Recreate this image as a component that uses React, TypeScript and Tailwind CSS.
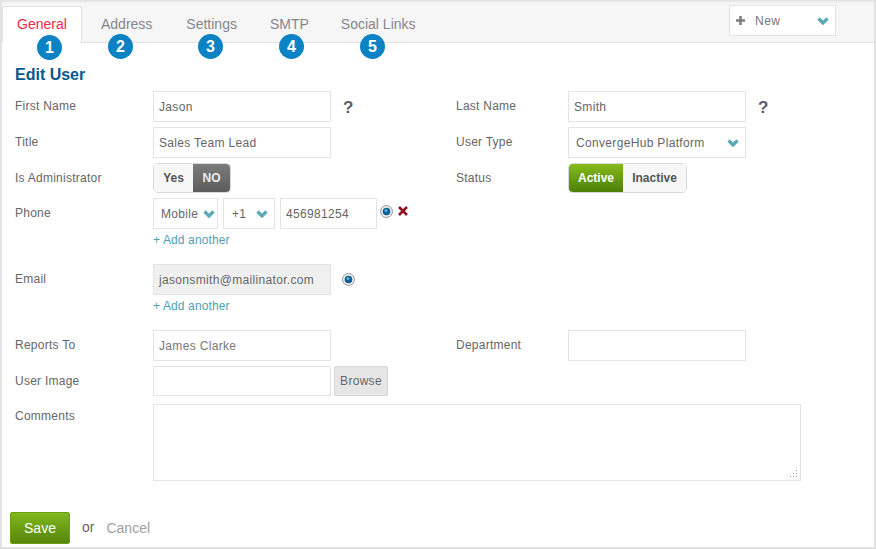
import React from "react";

const labelCls = "w-[138px] shrink-0 text-[12px] tracking-[0.25px] text-[#666]";
const rightLabelCls = "w-[112px] shrink-0 text-[12px] tracking-[0.25px] text-[#666]";
const fieldCls = "flex items-center border border-[#e4e4e4] text-[12px] tracking-[0.33px] text-[#666]";

const tabs = [
  { name: "General", cls: "" },
  { name: "Address", cls: "ml-[19px]" },
  { name: "Settings", cls: "ml-[34px]" },
  { name: "SMTP", cls: "ml-[33px]" },
  { name: "Social Links", cls: "ml-[32px]" },
];

const badges = [
  { n: 1, cls: "left-[35px] top-[35px] h-[25px] w-[25px]" },
  { n: 2, cls: "left-[106px] top-[34px] h-[25px] w-[25px]" },
  { n: 3, cls: "left-[196px] top-[34px] h-[25px] w-[25px]" },
  { n: 4, cls: "left-[277px] top-[34px] h-[25px] w-[25px]" },
  { n: 5, cls: "left-[358px] top-[34px] h-[25px] w-[25px]" },
];

const Chevron = ({ className = "" }: { className?: string }) => (
  <svg viewBox="0 0 12 8" className={`h-[8px] w-[12px] shrink-0 ${className}`}>
    <polyline points="1.5,1.5 6,6 10.5,1.5" fill="none" stroke="#5ba8b6" strokeWidth="3.2" />
  </svg>
);

const Radio = () => (
  <svg viewBox="0 0 13 13" className="h-[13px] w-[13px]">
    <circle cx="6.5" cy="6.5" r="6" fill="#ececec" stroke="#9a9a9a" strokeWidth="1" />
    <circle cx="6.5" cy="6.5" r="3.8" fill="#0f5f96" />
    <circle cx="6" cy="5.5" r="1.5" fill="#52b0e0" />
  </svg>
);

const Help = () => (
  <span className="text-[17px] font-bold leading-none text-[#5c5c66]">?</span>
);

const Label = ({ children }: { children: React.ReactNode }) => (
  <div className={labelCls}>{children}</div>
);

const Field = ({ value, muted }: { value?: string; muted?: boolean }) => (
  <div className={`${fieldCls} h-[31px] w-[178px] bg-white px-[5px] ${muted ? "text-[#777]" : ""}`}>{value}</div>
);

const AddAnother = () => (
  <div className="mt-[2px] text-[12px] tracking-[0.12px] text-[#4f9fb5]">+ Add another</div>
);

export default function App() {
  return (
    <div className="relative h-[549px] w-[876px] border-x-2 border-b-2 border-[#e2e2e2] bg-white font-['Liberation_Sans',Arial,sans-serif]">
      {/* tab bar */}
      <div className="flex h-[43px] items-end border-b border-[#e4e4e4] bg-[#f6f6f6] shadow-[inset_0_3px_3px_-2px_#d8d8d8]">
        {tabs.map((t, i) =>
          i === 0 ? (
            <div
              key={t.name}
              className="relative -mb-px flex h-[37px] w-[80px] items-start justify-center rounded-t-[3px] border border-b-0 border-[#e2e2e2] bg-white pt-[9px] text-[14px] leading-[16px] text-[#f0284a]"
            >
              {t.name}
            </div>
          ) : (
            <div
              key={t.name}
              className={`flex h-[37px] items-start pt-[11px] text-[14px] leading-[16px] text-[#85858c] ${t.cls}`}
            >
              {t.name}
            </div>
          )
        )}
        <div className="mb-[6px] ml-auto mr-[38px] flex h-[31px] w-[107px] items-center border border-[#e4e4e4] bg-white pl-[6px] pr-[6px] text-[12px] tracking-[0.5px] text-[#777]">
          <svg viewBox="0 0 10 10" className="h-[9px] w-[9px] shrink-0">
            <path d="M3.6 0h2.8v3.6H10v2.8H6.4V10H3.6V6.4H0V3.6h3.6z" fill="#7d7d7d" />
          </svg>
          <span className="ml-[10px]">New</span>
          <Chevron className="ml-auto" />
        </div>
      </div>

      {badges.map((b) => (
        <div
          key={b.n}
          className={`absolute flex items-center justify-center rounded-full bg-[#0b82c4] text-[16px] font-bold text-white ${b.cls}`}
        >
          {b.n}
        </div>
      ))}

      {/* form */}
      <div className="px-[13px]">
        <h2 className="mt-[23px] text-[16px] font-bold leading-[18px] text-[#05588f]">Edit User</h2>

        <div className="mt-[7px] flex items-start">
          <div className="flex w-[441px] items-start">
            <Label><div className="pt-[6px]">First Name</div></Label>
            <Field value="Jason" />
            <div className="ml-[12px] pt-[5px]"><Help /></div>
          </div>
          <div className="flex items-start">
            <div className={`${rightLabelCls} pt-[6px]`}>Last Name</div>
            <Field value="Smith" />
            <div className="ml-[12px] pt-[5px]"><Help /></div>
          </div>
        </div>

        <div className="mt-[5px] flex items-center">
          <div className="flex w-[441px] items-center">
            <Label><div className="pb-[2px]">Title</div></Label>
            <Field value="Sales Team Lead" />
          </div>
          <div className={`${rightLabelCls} pb-[2px]`}>User Type</div>
          <div className={`${fieldCls} h-[31px] w-[178px] bg-white pl-[7px] pr-[6px] tracking-[0.15px]`}>
            ConvergeHub Platform
            <Chevron className="ml-auto" />
          </div>
        </div>

        <div className="mt-[5px] flex items-center">
          <div className="flex w-[441px] items-center">
            <Label>Is Administrator</Label>
            <div className="flex h-[30px] overflow-hidden rounded-[5px] border border-[#d8d8d8] text-[12px] font-bold">
              <div className="flex w-[39px] items-center justify-center bg-[#f7f7f7] text-[#555]">Yes</div>
              <div className="flex w-[37px] items-center justify-center bg-gradient-to-b from-[#7c7c7c] to-[#5c5c5c] text-[#eee]">NO</div>
            </div>
          </div>
          <div className={rightLabelCls}>Status</div>
          <div className="flex h-[30px] overflow-hidden rounded-[5px] border border-[#d8d8d8] text-[12px] font-bold">
            <div className="flex w-[54px] items-center justify-center bg-gradient-to-b from-[#86bb1a] to-[#4c7f08] text-white">Active</div>
            <div className="flex w-[63px] items-center justify-center bg-[#f7f7f7] text-[#555]">Inactive</div>
          </div>
        </div>

        <div className="mt-[5px] flex items-start">
          <Label><div className="pt-[6px]">Phone</div></Label>
          <div>
            <div className="flex items-start">
              <div className={`${fieldCls} h-[31px] w-[65px] bg-white pl-[7px] pr-[2px] tracking-[0.1px]`}>
                Mobile
                <Chevron className="ml-auto" />
              </div>
              <div className={`${fieldCls} ml-[5px] h-[31px] w-[52px] bg-white pl-[8px] pr-[6px]`}>
                +1
                <Chevron className="ml-auto" />
              </div>
              <div className={`${fieldCls} ml-[5px] h-[31px] w-[97px] bg-white px-[5px]`}>456981254</div>
              <div className="ml-[3px] pt-[7px]"><Radio /></div>
              <svg viewBox="0 0 10 10" className="ml-[5px] mt-[8px] h-[10px] w-[10px]">
                <path d="M1 1l8 8M9 1l-8 8" stroke="#8a1420" strokeWidth="2.6" fill="none" />
              </svg>
            </div>
            <AddAnother />
          </div>
        </div>

        <div className="mt-[15px] flex items-start">
          <Label><div className="pt-[6px]">Email</div></Label>
          <div>
            <div className="flex items-start">
              <div className={`${fieldCls} h-[31px] w-[178px] bg-[#f0f0f0] px-[5px]`}>jasonsmith@mailinator.com</div>
              <div className="ml-[11px] pt-[9px]"><Radio /></div>
            </div>
            <AddAnother />
          </div>
        </div>

        <div className="mt-[15px] flex items-center">
          <div className="flex w-[441px] items-center">
            <Label><div className="pb-[2px]">Reports To</div></Label>
            <Field value="James Clarke" muted />
          </div>
          <div className={`${rightLabelCls} pb-[2px]`}>Department</div>
          <Field />
        </div>

        <div className="mt-[5px] flex items-center">
          <Label>User Image</Label>
          <div className={`${fieldCls} h-[30px] w-[178px] bg-white`} />
          <div className="ml-[3px] flex h-[30px] w-[54px] items-center justify-center rounded-[2px] border border-[#d4d4d4] bg-[#e6e6e6] text-[12px] tracking-[0.3px] text-[#666]">
            Browse
          </div>
        </div>

        <div className="mt-[8px] flex items-start">
          <Label><div className="pt-[3px]">Comments</div></Label>
          <div className="relative h-[77px] w-[648px] border border-[#e4e4e4] bg-white">
            <svg viewBox="0 0 9 9" className="absolute bottom-[2px] right-[2px] h-[9px] w-[9px]">
              <path d="M7 1h1v1H7zM4 4h1v1H4zM7 4h1v1H7zM1 7h1v1H1zM4 7h1v1H4zM7 7h1v1H7z" fill="#999" />
            </svg>
          </div>
        </div>

        <div className="-ml-[5px] mt-[31px] flex items-center">
          <div className="flex h-[32px] w-[60px] items-center justify-center rounded-[2px] border border-[#6b9e15] bg-gradient-to-b from-[#80b81c] to-[#56860c] text-[14px] text-white">
            Save
          </div>
          <span className="ml-[12px] pb-[2px] text-[14px] text-[#666]">or</span>
          <span className="ml-[12px] text-[14px] text-[#a0a0a0]">Cancel</span>
        </div>
      </div>
    </div>
  );
}
